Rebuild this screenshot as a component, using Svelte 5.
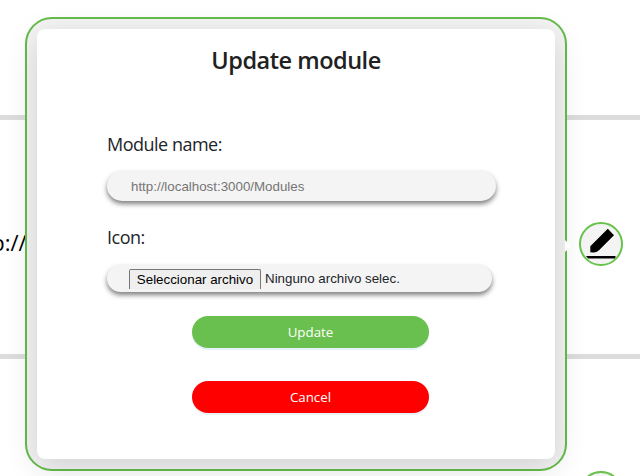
<script>
  const placeholder = 'http://localhost:3000/Modules';
</script>

<main>
  <div class="page">
    <div class="row first"></div>
    <div class="row second">
      <span class="url">http://</span>
      <span class="edit">
        <svg width="40" height="40" viewBox="0 0 40 40">
          <path d="M9.3 28.3V22.3L26.8 4.8L33 11.3L18 26.2Q15.5 28.8 12 28.5Z" />
          <path d="M5 32H34.5V34.4H7Z" />
        </svg>
      </span>
    </div>
    <div class="row third"><span class="edit"></span></div>
  </div>

  <section class="popup">
    <i class="arrow"></i>
    <form class="card">
      <h1><span>Update module</span></h1>
      <label class="name" for="name"><span>Module name:</span></label>
      <input id="name" type="text" {placeholder} />
      <div class="label icon"><span>Icon:</span></div>
      <div class="file">
        <button type="button" class="choose"><span>Seleccionar archivo</span></button>
        <span class="none">Ninguno archivo selec.</span>
      </div>
      <button type="button" class="action update"><span>Update</span></button>
      <button type="button" class="action cancel"><span>Cancel</span></button>
    </form>
  </section>
</main>

<style>
  :global(body) { margin: 0; background: #fff; }
  main {
    position: relative;
    width: 640px;
    height: 476px;
    overflow: hidden;
    background: #fff;
    font-family: "Open Sans", "Noto Sans", sans-serif;
    color: #212529;
  }
  .page { display: flex; flex-direction: column; }
  .row {
    box-sizing: border-box;
    display: flex;
    flex: none;
    justify-content: space-between;
    border-bottom: 5px solid #dcdcdc;
  }
  .first { height: 120px; }
  .second { height: 239px; align-items: center; padding-right: 17px; }
  .third { height: 239px; justify-content: flex-end; align-items: center; padding-right: 17px; }
  .url {
    margin-left: -38px;
    padding-top: 9px;
    font: 22px/30px "Open Sans", sans-serif;
    color: #000;
  }
  .edit {
    box-sizing: border-box;
    width: 44px;
    height: 44px;
    margin-top: 14px;
    border: 2px solid #68c24c;
    border-radius: 50%;
    background: #f4f4f4;
    overflow: hidden;
  }
  .third .edit { margin-top: 33px; }
  .edit svg { display: block; }
  .popup {
    box-sizing: border-box;
    position: absolute;
    left: 25px;
    top: 17px;
    width: 542px;
    height: 454px;
    padding: 10px;
    border: 2px solid #65bc4a;
    border-radius: 27px;
    background: #f4f4f4;
  }
  .arrow {
    position: absolute;
    right: -6px;
    top: 221px;
    border: 6px solid transparent;
    border-left: 6px solid #fff;
    border-right: 0;
  }
  .card {
    box-sizing: border-box;
    display: flex;
    flex-direction: column;
    width: 518px;
    height: 430px;
    padding: 0 59px 0 70px;
    border-radius: 8px;
    background: #fff;
    box-shadow: 0 8px 32px rgba(0, 0, 0, 0.15);
  }
  h1 {
    align-self: center;
    margin: 15px 0 0 -11px;
    font-size: 23.5px;
    line-height: 32px;
    font-weight: 600;
    letter-spacing: -0.48px;
    color: #212121;
    white-space: nowrap;
  }
  label, .label {
    display: block;
    font-size: 18px;
    line-height: 26px;
    font-weight: 400;
    letter-spacing: -0.5px;
  }
  .name { margin-top: 55px; }
  input {
    box-sizing: border-box;
    width: 389px;
    height: 30px;
    margin: 14px 0 0;
    padding: 0 24px;
    border: 0;
    border-radius: 15px;
    background: #f4f4f4;
    box-shadow: 0 3px 5px rgba(0, 0, 0, 0.5);
    font: 13.333px "Liberation Sans", Arial, sans-serif;
  }
  input::placeholder { color: #757575; opacity: 1; }
  .icon { margin-top: 23px; }
  .file {
    box-sizing: border-box;
    display: flex;
    width: 385px;
    height: 27px;
    margin-top: 15px;
    padding: 4px 22px 0;
    border-radius: 14px;
    background: #f4f4f4;
    box-shadow: 0 3px 5px rgba(0, 0, 0, 0.5);
    font: 13.333px/20px "Liberation Sans", Arial, sans-serif;
    white-space: nowrap;
  }
  .choose {
    box-sizing: border-box;
    width: 132px;
    height: 20px;
    padding: 0;
    border: 1px solid #767676;
    border-bottom: 0;
    border-radius: 2px 2px 0 0;
    background: #efefef;
    color: #000;
    font: inherit;
  }
  .none { margin-left: 4px; }
  .action {
    align-self: center;
    width: 237px;
    height: 32px;
    margin-left: 18px;
    padding: 0;
    border: 0;
    border-radius: 16px;
    box-shadow: 0 2px 0 #e7f1fa;
    color: #fff;
    font: 13.333px/32px "Open Sans", sans-serif;
  }
  .update { margin-top: 24px; background: #6ac04e; }
  .cancel { margin-top: 33px; background: #f00; }
</style>
